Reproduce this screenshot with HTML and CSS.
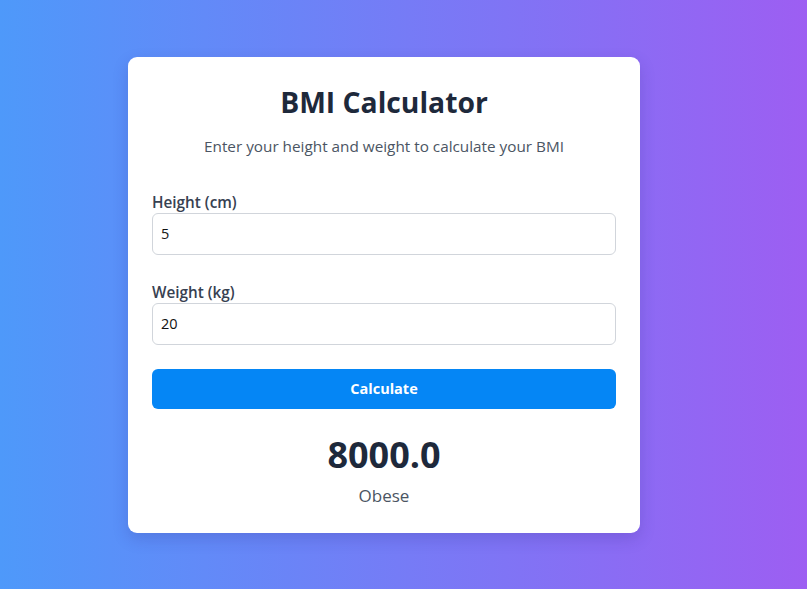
FILE: index.html
```html
<!DOCTYPE html>
<html lang="en">
<head>
<meta charset="utf-8">
<title>BMI Calculator</title>
<link rel="stylesheet" href="styles.css">
</head>
<body>
<main class="page">
  <section class="card">
    <h1 class="title">BMI Calculator</h1>
    <p class="subtitle">Enter your height and weight to calculate your BMI</p>
    <div class="field">
      <label class="label" for="h">Height (cm)</label>
      <input class="input" id="h" type="text" value="5">
    </div>
    <div class="field">
      <label class="label" for="w">Weight (kg)</label>
      <input class="input" id="w" type="text" value="20">
    </div>
    <button class="btn" type="button">Calculate</button>
    <div class="result">
      <div class="bmi">8000.0</div>
      <div class="category">Obese</div>
    </div>
  </section>
</main>
</body>
</html>
```

FILE: styles.css
```css
* { box-sizing: border-box; }
html, body { margin: 0; height: 100%; }
body {
  font-family: "Open Sans", "Noto Sans", sans-serif;
  background: linear-gradient(90deg, #4e99fa 0%, #9d5ef2 100%);
}
.page {
  min-height: 100vh;
  display: flex;
  align-items: center;
  justify-content: center;
  padding-right: 39px;
}
.card {
  width: 512px;
  background: #fff;
  border-radius: 9px;
  padding: 25px 24px 24px;
  box-shadow: 0 6px 16px rgba(40, 30, 120, 0.18);
  display: flex;
  flex-direction: column;
}
.title {
  margin: 0;
  text-align: center;
  font-size: 28.3px;
  line-height: 40px;
  font-weight: 700;
  color: #1e293b;
}
.subtitle {
  margin: 13px 0 0;
  text-align: center;
  font-size: 15.3px;
  line-height: 22px;
  color: #4b5563;
}
.field {
  display: flex;
  flex-direction: column;
  margin-top: 35px;
}
.field + .field { margin-top: 27px; }
.label {
  font-size: 15.3px;
  line-height: 20px;
  font-weight: 600;
  color: #374151;
  margin-bottom: 1px;
}
.input {
  height: 42px;
  border: 1px solid #d1d5db;
  border-radius: 6px;
  padding: 0 8px;
  font-family: inherit;
  font-size: 14.5px;
  color: #111;
  background: #fff;
}
.btn {
  margin-top: 24px;
  height: 40px;
  border: 0;
  border-radius: 6px;
  background: #0586f5;
  color: #fff;
  font-family: inherit;
  font-size: 14.5px;
  font-weight: 700;
}
.result {
  margin-top: 24px;
  text-align: center;
}
.bmi {
  font-size: 36px;
  line-height: 44px;
  font-weight: 700;
  color: #1e293b;
}
.category {
  margin-top: 6px;
  font-size: 17px;
  line-height: 26px;
  color: #4b5563;
}
```
